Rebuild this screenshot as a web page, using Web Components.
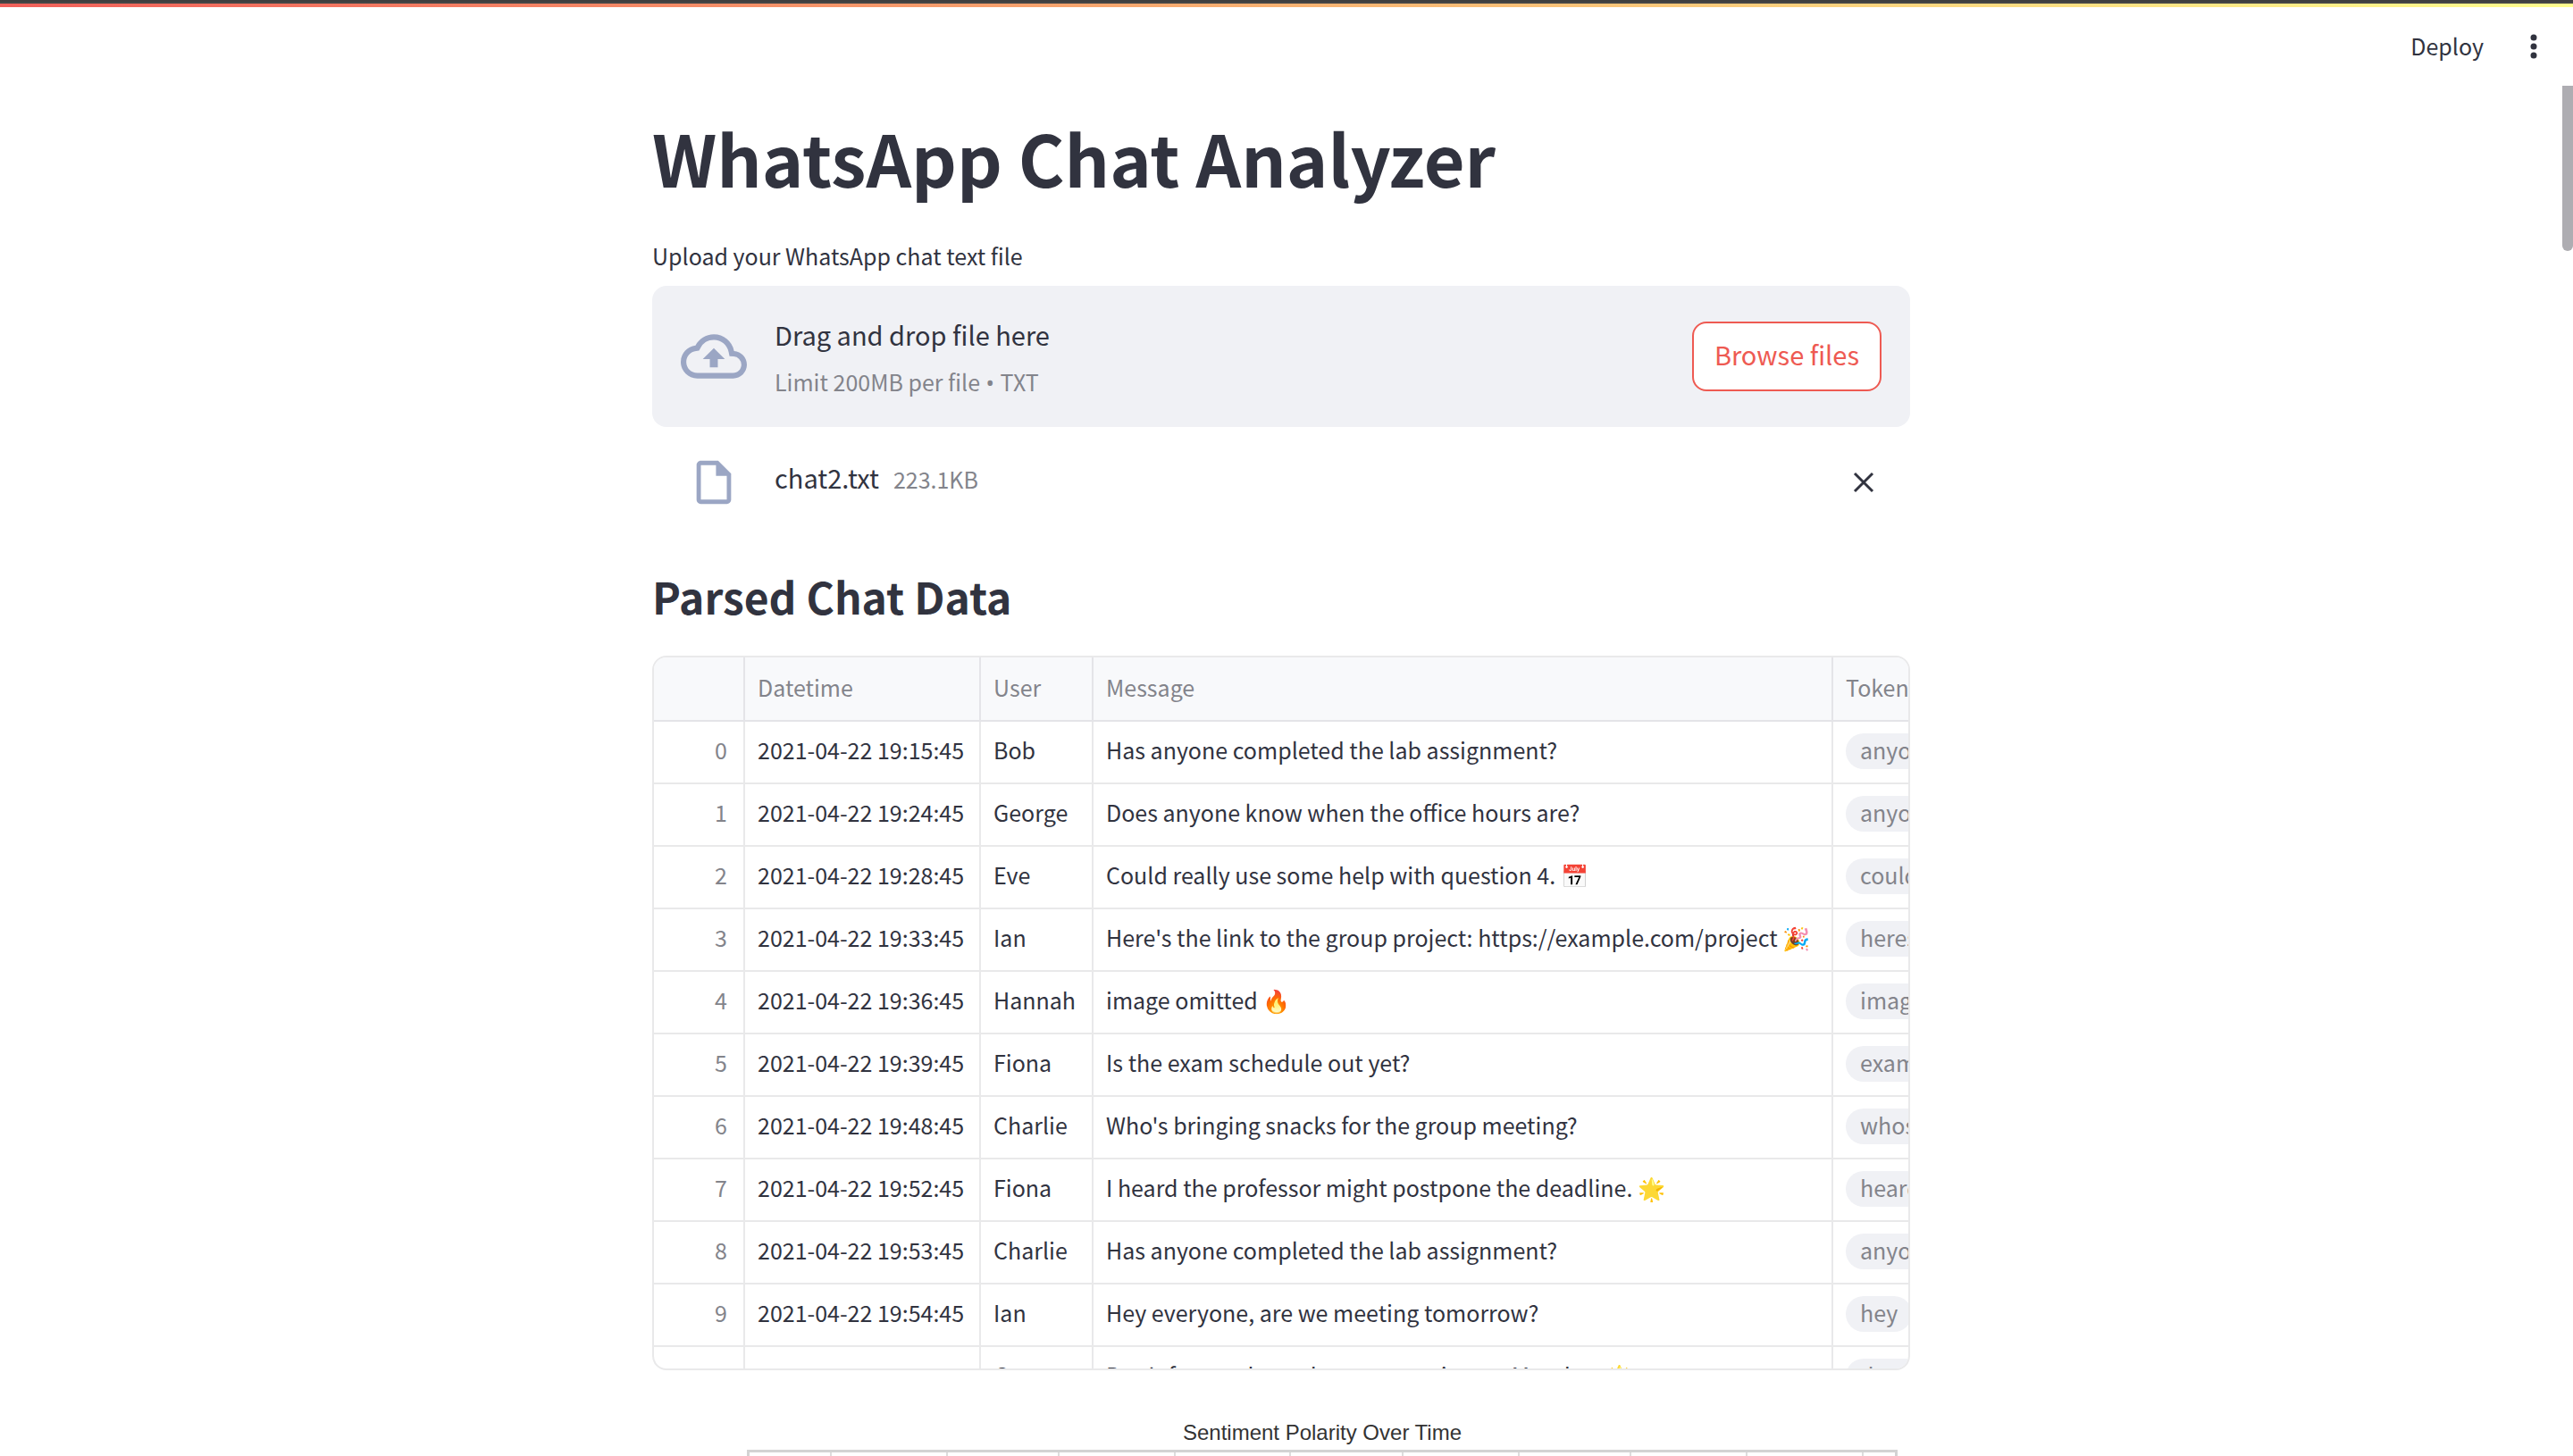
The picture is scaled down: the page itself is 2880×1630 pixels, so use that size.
<!DOCTYPE html>
<html lang="en">
<head>
<meta charset="utf-8">
<title>WhatsApp Chat Analyzer</title>
<style>
  :root {
    --text: #31333f;
    --muted: #83848b;
    --line: #e9e9ea;
    --panel: #f0f1f5;
    --accent: #ee5a52;
    --icon: #9ba6c4;
  }
  body {
    margin: 0;
    background: #fff;
    color: var(--text);
    font: 25px/40px "Noto Sans CJK SC", "Noto Sans", sans-serif;
  }
</style>
</head>
<body>
<app-shell>
  <app-toolbar slot="toolbar"></app-toolbar>
  <page-heading level="1">WhatsApp Chat Analyzer</page-heading>
  <file-uploader label="Upload your WhatsApp chat text file" limit="Limit 200MB per file" types="TXT">
    <uploaded-file name="chat2.txt" size="223.1KB"></uploaded-file>
  </file-uploader>
  <page-heading level="2">Parsed Chat Data</page-heading>
  <data-grid></data-grid>
  <line-chart>Sentiment Polarity Over Time</line-chart>
</app-shell>

<script>
const define = (name, render, after) => customElements.define(name, class extends HTMLElement {
  connectedCallback() {
    if (this.shadowRoot) return;
    const root = this.attachShadow({ mode: "open" });
    root.innerHTML = render(this);
    if (after) after(root);
  }
});

define("app-shell", () => `
  <style>
    :host { display: flex; flex-direction: column; height: 100vh; overflow: hidden; }
    .strip { flex: none; height: 4px; background: linear-gradient(#3f3f3f 50%, #464646 50%); }
    .decoration { flex: none; height: 4px; background: linear-gradient(90deg, #f0605a, #f8b272 50%, #fffd8e); }
    .body { flex: 1; display: flex; min-height: 0; }
    main { flex: 1; display: flex; justify-content: center; overflow: hidden; }
    .column { width: 100%; max-width: 1408px; padding-top: 27px; }
    .track { width: 12px; }
    .thumb { height: 185px; background: #aeadb2; border-radius: 0 0 6px 6px; }
  </style>
  <div class="strip"></div>
  <div class="decoration"></div>
  <slot name="toolbar"></slot>
  <div class="body">
    <main><div class="column"><slot></slot></div></main>
    <div class="track"><div class="thumb"></div></div>
  </div>`);

define("app-toolbar", () => `
  <style>
    :host { display: block; flex: none; }
    header { display: flex; justify-content: flex-end; align-items: center; gap: 36px; height: 88px; padding-right: 24px; }
    button { border: 0; background: none; padding: 0; font: inherit; color: inherit; cursor: pointer; }
    .deploy { padding-bottom: 2px; }
    .menu { width: 40px; height: 40px; }
    svg { display: block; width: 40px; height: 40px; fill: currentColor; }
  </style>
  <header>
    <button class="deploy">Deploy</button>
    <button class="menu" aria-label="Main menu">
      <svg viewBox="0 0 40 40"><circle cx="20" cy="10" r="3.5"/><circle cx="20" cy="20" r="3.5"/><circle cx="20" cy="30" r="3.5"/></svg>
    </button>
  </header>`);

define("page-heading", el => {
  const tag = "h" + el.getAttribute("level");
  return `
  <style>
    :host { display: block; }
    h1, h2 { margin: 0; font-weight: 700; }
    h1 { font-size: 79px; line-height: 106px; margin-bottom: 37px; }
    h2 { font-size: 48px; line-height: 60px; margin: 67px 0 37px; }
  </style>
  <${tag}><slot></slot></${tag}>`;
});

define("file-uploader", el => `
  <style>
    :host { display: block; }
    label { display: block; margin-bottom: 14px; }
    .drop { display: flex; align-items: center; gap: 31px; padding: 30px 32px; background: var(--panel); border-radius: 16px; }
    svg { flex: none; width: 74px; height: 74px; fill: var(--icon); }
    .text { flex: 1; display: flex; flex-direction: column; gap: 8px; }
    .title { font-size: 29px; line-height: 48px; }
    .hint { line-height: 42px; color: var(--muted); }
    .dot { font-family: "Noto Sans", sans-serif; line-height: 1; }
    button { font: inherit; font-size: 29px; line-height: 44px; padding: 12px 23px 18px; color: var(--accent); background: #fff; border: 2px solid var(--accent); border-radius: 16px; cursor: pointer; }
  </style>
  <label for="file">${el.getAttribute("label")}</label>
  <section class="drop">
    <input id="file" type="file" accept=".txt" hidden>
    <svg viewBox="0 0 24 24" aria-hidden="true"><path d="M19.35 10.04A7.49 7.49 0 0 0 12 4C9.11 4 6.6 5.64 5.35 8.04A5.994 5.994 0 0 0 0 14c0 3.31 2.69 6 6 6h13c2.76 0 5-2.24 5-5 0-2.64-2.05-4.78-4.65-4.96zM19 18H6c-2.21 0-4-1.79-4-4 0-2.05 1.53-3.76 3.56-3.97l1.07-.11.5-.95A5.469 5.469 0 0 1 12 6c2.62 0 4.88 1.86 5.39 4.43l.3 1.5 1.53.11A2.98 2.98 0 0 1 22 15c0 1.65-1.35 3-3 3zM8 13h2.55v3h2.9v-3H16l-4-4z"/></svg>
    <div class="text">
      <span class="title">Drag and drop file here</span>
      <span class="hint">${el.getAttribute("limit")}<span class="dot"> • </span>${el.getAttribute("types")}</span>
    </div>
    <button type="button">Browse files</button>
  </section>
  <slot></slot>`,
  root => root.querySelector("button").addEventListener("click", () => root.querySelector("input").click()));

define("uploaded-file", el => `
  <style>
    :host { display: flex; align-items: center; gap: 31px; height: 60px; padding: 0 32px; margin-top: 32px; }
    .icon { flex: none; display: flex; justify-content: center; width: 74px; }
    .icon svg { width: 58px; height: 58px; fill: var(--icon); }
    .text { flex: 1; display: flex; align-items: baseline; gap: 16px; padding-bottom: 12px; }
    .name { font-size: 29px; line-height: 48px; }
    .size { color: var(--muted); }
    button { display: flex; justify-content: center; align-items: center; width: 40px; height: 40px; padding: 0; border: 0; background: none; color: inherit; cursor: pointer; }
    button svg { width: 24px; height: 24px; stroke: currentColor; stroke-width: 3; fill: none; }
  </style>
  <span class="icon"><svg viewBox="0 0 24 24" aria-hidden="true"><path d="M14 2H6c-1.1 0-1.99.9-1.99 2L4 20c0 1.1.89 2 1.99 2H18c1.1 0 2-.9 2-2V8l-6-6zM6 20V4h7v5h5v11H6z"/></svg></span>
  <span class="text"><span class="name">${el.getAttribute("name")}</span><span class="size">${el.getAttribute("size")}</span></span>
  <button type="button" aria-label="Remove file"><svg viewBox="0 0 24 24"><path d="M2 2L22 22M22 2L2 22"/></svg></button>`);

define("token-chip", () => `
  <style>
    :host { display: block; width: fit-content; padding: 0 16px 4px; line-height: 36px; border-radius: 20px; background: var(--panel); color: var(--muted); }
  </style>
  <slot></slot>`);

const rows = [
  ["2021-04-22 19:15:45", "Bob", "Has anyone completed the lab assignment?", "anyone"],
  ["2021-04-22 19:24:45", "George", "Does anyone know when the office hours are?", "anyone"],
  ["2021-04-22 19:28:45", "Eve", "Could really use some help with question 4. 📅", "could"],
  ["2021-04-22 19:33:45", "Ian", "Here's the link to the group project: https://example.com/project 🎉", "heres"],
  ["2021-04-22 19:36:45", "Hannah", "image omitted 🔥", "image"],
  ["2021-04-22 19:39:45", "Fiona", "Is the exam schedule out yet?", "exam"],
  ["2021-04-22 19:48:45", "Charlie", "Who's bringing snacks for the group meeting?", "whos"],
  ["2021-04-22 19:52:45", "Fiona", "I heard the professor might postpone the deadline. 🌟", "heard"],
  ["2021-04-22 19:53:45", "Charlie", "Has anyone completed the lab assignment?", "anyone"],
  ["2021-04-22 19:54:45", "Ian", "Hey everyone, are we meeting tomorrow?", "hey"],
  ["2021-04-22 19:55:45", "George", "Don't forget about the presentation on Monday. 🌟", "dont"]
];

define("data-grid", () => `
  <style>
    :host { display: block; box-sizing: border-box; height: 800px; border: 2px solid var(--line); border-radius: 16px; overflow: hidden; }
    table { border-collapse: separate; border-spacing: 0; table-layout: fixed; width: 1520px; }
    th, td { box-sizing: border-box; height: 70px; padding: 0 14px 6px; border-right: 2px solid var(--line); border-bottom: 2px solid var(--line); text-align: left; font-weight: 400; white-space: nowrap; line-height: 40px; vertical-align: middle; }
    thead th { height: 72px; padding-bottom: 4px; background: #f8f9fb; color: var(--muted); border-color: #e4e4e8; }
    tbody th { color: var(--muted); text-align: right; padding-right: 18px; }
    td:last-child { padding-bottom: 2px; }
    .index { width: 102px; } .date { width: 264px; } .user { width: 126px; } .message { width: 828px; }
  </style>
  <table>
    <colgroup><col class="index"><col class="date"><col class="user"><col class="message"><col></colgroup>
    <thead><tr><th></th><th>Datetime</th><th>User</th><th>Message</th><th>Tokens</th></tr></thead>
    <tbody>${rows.map(([date, user, message, token], i) => `
      <tr><th scope="row">${i}</th><td>${date}</td><td>${user}</td><td>${message}</td><td><token-chip>${token}</token-chip></td></tr>`).join("")}
    </tbody>
  </table>`);

define("line-chart", () => `
  <style>
    :host { display: block; padding: 56px 14px 0 106px; }
    figure { margin: 0; }
    figcaption { font: 24px/28px "Liberation Sans", Arial, sans-serif; text-align: center; color: #333; margin-bottom: 5px; }
    svg { display: block; width: 100%; height: 400px; }
    line { stroke: #ddd; stroke-width: 2; }
    rect { fill: none; stroke: #d3d3d3; stroke-width: 3; }
  </style>
  <figure>
    <figcaption><slot></slot></figcaption>
    <svg viewBox="0 0 1288 400" preserveAspectRatio="none" aria-hidden="true">
      ${[94, 224, 349, 479, 608, 734, 864, 989, 1119, 1249].map(x => `<line x1="${x}" x2="${x}" y1="2" y2="400"/>`).join("")}
      <rect x="1.5" y="1.5" width="1285" height="397"/>
    </svg>
  </figure>`);
</script>
</body>
</html>
